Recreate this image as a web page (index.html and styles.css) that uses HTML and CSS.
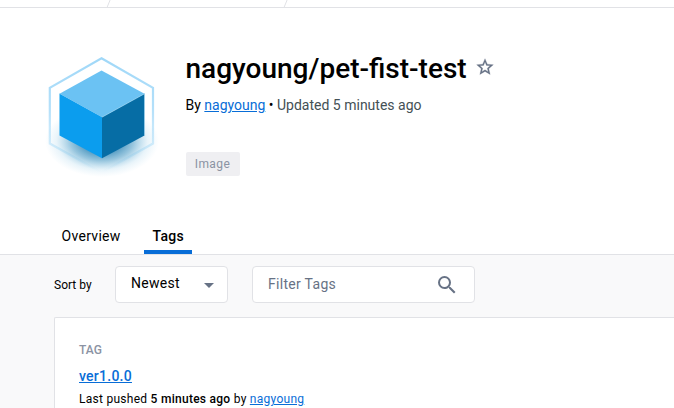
FILE: index.html
```html
<!DOCTYPE html>
<html lang="en">
<head>
<meta charset="utf-8">
<title>nagyoung/pet-fist-test</title>
<link rel="stylesheet" href="styles.css">
</head>
<body>
<nav class="crumbs">
  <svg width="674" height="7" viewBox="0 0 674 7"><path d="M107 7.500L110.500 -1M284 7.500L287.500 -1"/></svg>
</nav>
<header class="repo">
  <svg class="logo" width="124" height="130" viewBox="0 0 124 130">
    <defs>
      <linearGradient id="edge" x1="0" y1="0" x2="0" y2="1"><stop offset="0" stop-color="#a0d8f8"/><stop offset=".45" stop-color="#b4e0fa"/><stop offset=".8" stop-color="#dcf1fd"/><stop offset="1" stop-color="#e4f5fe" stop-opacity="0"/></linearGradient>
      <radialGradient id="shade"><stop offset="0" stop-color="#086da5" stop-opacity=".9"/><stop offset=".3" stop-color="#086da5" stop-opacity=".75"/><stop offset=".55" stop-color="#1a80b6" stop-opacity=".45"/><stop offset=".8" stop-color="#48a5d5" stop-opacity=".12"/><stop offset="1" stop-color="#60b5e0" stop-opacity="0"/></radialGradient>
    </defs>
    <path d="M61.500 8.200L113 37.800V93.500L61.500 122.500L9.800 93.500V37.800Z" fill="none" stroke="url(#edge)" stroke-width="2.200"/>
    <ellipse cx="62" cy="91" rx="57" ry="36" fill="url(#shade)"/>
    <path d="M19.500 43.500L62 67V108.300L19.500 85.500Z" fill="#0b9dee"/>
    <path d="M62 67L104.500 43.500V85.500L62 108.300Z" fill="#066da5"/>
    <path d="M61.500 20.500L104.500 43.800L62 67.200L19.500 43.800Z" fill="#6bc2f3"/>
    <path d="M62 67.200L104.500 43.800V85.500" fill="none" stroke="#a4d8f3" stroke-width=".6"/>
  </svg>
  <div class="info">
    <div class="title-row">
      <h1>nagyoung/pet-fist-test</h1>
      <svg class="star" width="20" height="20" viewBox="0 0 24 24"><path d="M22 9.240l-7.190-.620L12 2 9.190 8.630 2 9.240l5.460 4.730L5.820 21 12 17.270 18.180 21l-1.630-7.030L22 9.240zM12 15.400l-3.760 2.270 1-4.280-3.320-2.880 4.380-.380L12 6.100l1.710 4.040 4.380.380-3.320 2.880 1 4.280L12 15.400z"/></svg>
    </div>
    <p class="byline">By <a href="#">nagyoung</a> • <span>Updated 5 minutes ago</span></p>
    <span class="badge">Image</span>
  </div>
</header>
<nav class="tabs">
  <a class="tab" href="#">Overview</a>
  <a class="tab active" href="#">Tags</a>
</nav>
<main>
  <div class="filters">
    <span class="sort-label">Sort by</span>
    <div class="select"><span>Newest</span><svg width="10" height="5" viewBox="0 0 10 5"><path d="M0 0H10L5 5Z"/></svg></div>
    <div class="search"><span>Filter Tags</span><svg width="24" height="24" viewBox="0 0 24 24"><path d="M15.500 14h-.790l-.280-.270A6.471 6.471 0 0 0 16 9.500 6.500 6.500 0 1 0 9.500 16c1.610 0 3.090-.590 4.230-1.570l.270.280v.790l5 4.990L20.490 19l-4.990-5zm-6 0C7.010 14 5 11.990 5 9.500S7.010 5 9.500 5 14 7.010 14 9.500 11.990 14 9.500 14z"/></svg></div>
  </div>
  <section class="card">
    <div class="tag-label">TAG</div>
    <a class="version" href="#">ver1.0.0</a>
    <p class="pushed">Last pushed <strong>5 minutes ago</strong> by <a href="#">nagyoung</a></p>
  </section>
</main>
</body>
</html>
```
FILE: styles.css
```css
* { box-sizing: border-box; }
body {
  margin: 0;
  height: 408px;
  overflow: hidden;
  display: flex;
  flex-direction: column;
  background: #fff;
  color: #000;
  font-family: Roboto, sans-serif;
  font-size: 14px;
}
h1, p { margin: 0; }
a { color: #086dd7; }
svg { display: block; flex: none; }
.crumbs { flex: none; height: 8px; border-bottom: 1px solid #e1e2e6; }
.crumbs path { fill: none; stroke: #e1e2e6; }
.repo { flex: none; height: 210px; display: flex; gap: 21.500px; padding: 42px 0 0 40px; }
.title-row { height: 38px; display: flex; align-items: center; gap: 8px; }
h1 { font-size: 28px; line-height: 38px; font-weight: 500; }
.star { fill: #677285; stroke: #677285; stroke-width: .3; margin-top: -4px; }
.byline { margin-top: 7px; line-height: 20px; }
.byline span { color: #445055; }
.badge {
  display: block;
  width: 54px;
  height: 24px;
  margin-top: 37px;
  border-radius: 2px;
  background: #efeff2;
  color: #8b93a3;
  font-size: 12px;
  line-height: 24px;
  letter-spacing: .4px;
  text-align: center;
}
.tabs { flex: none; height: 37px; display: flex; gap: 16px; padding-left: 54px; border-bottom: 1px solid #e1e2e6; }
.tab { height: 36px; padding: 8px 7.500px 0; line-height: 20px; color: #000; text-decoration: none; letter-spacing: .3px; }
.tab:first-child { width: 74px; }
.active { width: 48px; padding-left: 8.500px; font-weight: 500; border-bottom: 4px solid #086dd7; }
main { flex: 1; background: #f9f9fa; padding: 11px 0 0 54px; }
.filters { display: flex; height: 37px; }
.sort-label { width: 61px; font-size: 12px; line-height: 38px; }
.select, .search { display: flex; align-items: center; justify-content: space-between; background: #fff; border: 1px solid #e1e2e6; border-radius: 4px; padding-left: 15px; letter-spacing: .3px; }
.select { width: 113px; padding-right: 13px; }
.select span { margin-top: -3px; }
.select svg { fill: #677285; margin-top: 1px; }
.search { width: 223px; margin-left: 24px; padding-right: 15px; color: #677285; }
.search span { margin-top: -2px; }
.search svg { fill: #677285; }
.card { height: 110px; margin-top: 14px; border: solid #e1e2e6; border-width: 1px 0 0 1px; border-radius: 2px 0 0; background: #fff; padding: 24px 0 0 24px; }
.tag-label { color: #8b93a3; font-size: 12px; line-height: 16px; font-weight: 500; }
.version { display: block; width: max-content; margin-top: 8px; line-height: 20px; font-weight: 500; letter-spacing: .25px; }
.pushed { margin-top: 5px; font-size: 12px; line-height: 16px; letter-spacing: .27px; }
strong { font-weight: 500; }
```
